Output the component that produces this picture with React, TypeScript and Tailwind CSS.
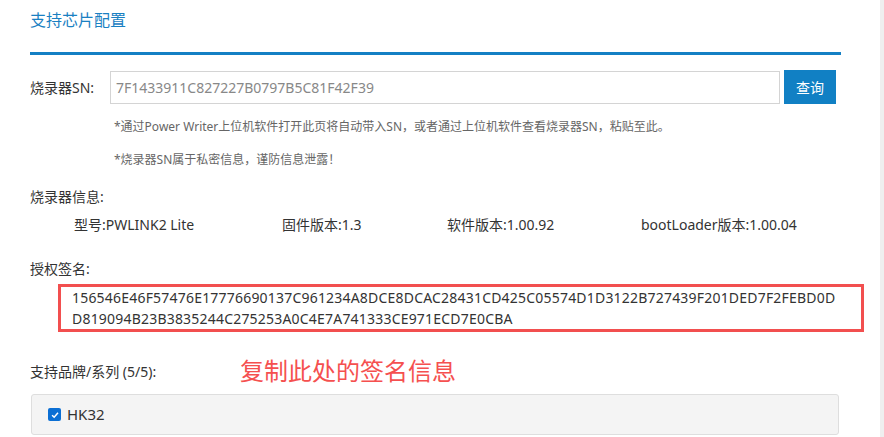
export default function App() {
  const font = { fontFamily: '"Noto Sans", "Noto Sans CJK SC", sans-serif' };
  return (
    <div className="flex h-[437px] w-[884px] overflow-hidden bg-white text-[#333]" style={font}>
      <div className="w-[841px] pl-[30px]">
        <div className="pt-[8px] text-[16px] leading-6 text-[#1a80c2]">支持芯片配置</div>
        <div className="mt-[20px] h-[3px] bg-[#1480c4]" />

        <div className="mt-[15px] flex items-center">
          <label className="w-[80px] text-[14px]">烧录器SN:</label>
          <div className="flex h-[33px] w-[670px] items-center border border-[#d4d4d4] px-[5px] text-[14px] text-[#888]">
            7F1433911C827227B0797B5C81F42F39
          </div>
          <button className="ml-[4px] h-[34px] w-[52px] bg-[#1180c4] text-[14px] text-white">查询</button>
        </div>

        <div className="mt-[14px] pl-[84px] text-[12px] leading-[18px] text-[#666]">
          *通过Power Writer上位机软件打开此页将自动带入SN，或者通过上位机软件查看烧录器SN，粘贴至此。
        </div>
        <div className="mt-[15px] pl-[84px] text-[12px] leading-[18px] text-[#666]">
          *烧录器SN属于私密信息，谨防信息泄露！
        </div>

        <div className="mt-[18px] text-[14px] leading-5">烧录器信息:</div>
        <div className="mt-[8px] flex pl-[44px] text-[14px] leading-5">
          <span className="w-[208px]">型号:PWLINK2 Lite</span>
          <span className="w-[165px]">固件版本:1.3</span>
          <span className="w-[194px]">软件版本:1.00.92</span>
          <span>bootLoader版本:1.00.04</span>
        </div>

        <div className="mt-[24px] text-[14px] leading-5">授权签名:</div>
        <div className="ml-[28px] mt-[5px] w-[806px] border-[3px] border-[#f24f4f] px-[11px] text-[14px] leading-[21px] tracking-[0.2px]">
          <div>156546E46F57476E17776690137C961234A8DCE8DCAC28431CD425C05574D1D3122B727439F201DED7F2FEBD0D</div>
          <div>D819094B23B3835244C275253A0C4E7A741333CE971ECD7E0CBA</div>
        </div>

        <div className="mt-[23px] flex items-center">
          <span className="w-[210px] text-[14px]">支持品牌/系列 (5/5):</span>
          <span className="text-[24px] leading-8 text-[#f5504f]">复制此处的签名信息</span>
        </div>
        <div className="ml-[1px] mt-[7px] flex h-[41px] w-[808px] items-center rounded-[3px] border border-[#dedede] bg-[#f4f4f4] pl-[16px]">
          <span className="flex h-[13px] w-[13px] items-center justify-center rounded-[2px] bg-[#0b6fd4]">
            <svg viewBox="0 0 12 12" className="h-[10px] w-[10px]">
              <path d="M2.5 6.2 L5 8.6 L9.6 3.4" fill="none" stroke="white" strokeWidth="1.8" />
            </svg>
          </span>
          <span className="ml-[6px] text-[15px]">HK32</span>
        </div>
      </div>
      <div className="flex-1" />
      <div className="w-[4px] bg-[#efefef]" />
    </div>
  );
}
